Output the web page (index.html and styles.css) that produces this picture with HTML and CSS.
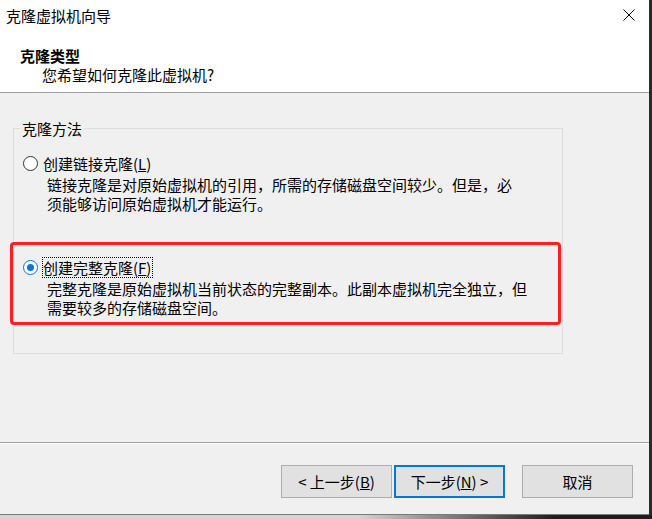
FILE: index.html
```html
<!DOCTYPE html>
<html lang="zh-CN">
<head>
    <meta charset="UTF-8">
    <meta name="viewport" content="width=device-width, initial-scale=1.0">
    <title>克隆虚拟机向导</title>
    <link rel="stylesheet" href="styles.css">
</head>
<body>

<div class="window">
    <!-- Title bar -->
    <div class="titlebar">
        <span class="title">克隆虚拟机向导</span>
        <svg class="close-icon" width="12" height="12" viewBox="0 0 12 12">
            <path d="M0.5 0.5 L11.5 11.5 M11.5 0.5 L0.5 11.5" stroke="#000" stroke-width="1" fill="none"/>
        </svg>
    </div>

    <!-- Wizard page header -->
    <div class="header">
        <div class="heading">克隆类型</div>
        <div class="subheading">您希望如何克隆此虚拟机?</div>
    </div>

    <!-- Options -->
    <div class="content">
        <fieldset class="group">
            <legend>克隆方法</legend>

            <div class="option">
                <div class="option-row">
                    <span class="radio"></span>
                    <span class="option-label">创建链接克隆(<u>L</u>)</span>
                </div>
                <p class="option-desc">链接克隆是对原始虚拟机的引用，所需的存储磁盘空间较少。但是，必<br>须能够访问原始虚拟机才能运行。</p>
            </div>

            <div class="option option-selected">
                <div class="highlight"></div>
                <div class="option-row">
                    <span class="radio radio-checked"></span>
                    <span class="option-label focused">创建完整克隆(<u>F</u>)</span>
                </div>
                <p class="option-desc">完整克隆是原始虚拟机当前状态的完整副本。此副本虚拟机完全独立，但<br>需要较多的存储磁盘空间。</p>
            </div>
        </fieldset>
    </div>

    <!-- Buttons -->
    <div class="footer">
        <button class="btn">&lt; 上一步(<u>B</u>)</button>
        <button class="btn btn-default">下一步(<u>N</u>) &gt;</button>
        <button class="btn btn-cancel">取消</button>
    </div>
</div>

</body>
</html>
```

FILE: styles.css
```css
/* Page and window frame */
body {
    margin: 0;
    background-color: #1e1e1e;
    background-image: linear-gradient(to right, #d4d4d4 0, #d4d4d4 55%, #1e1e1e 85%);
    font-family: "Noto Sans CJK SC", "Microsoft YaHei", sans-serif;
    font-size: 15px;
    color: #000;
    height: 519px;
    overflow: hidden;
}

.window {
    width: 649px;
    height: 515px;
    box-sizing: border-box;
    background-color: #f0f0f0;
    border-bottom: 1px solid #7a7a7a;
    box-shadow: 3px 0 0 #2a2a2a;
}

/* Title bar */
.titlebar {
    height: 30px;
    background-color: #fff;
    display: flex;
    align-items: center;
    justify-content: space-between;
    padding: 0 14px 0 6px;
}

.title {
    line-height: 19px;
}

.close-icon {
    display: block;
}

/* Header */
.header {
    height: 63px;
    box-sizing: border-box;
    background-color: #fff;
    border-bottom: 1px solid #a0a0a0;
    padding: 16px 0 0 20px;
}

.heading {
    font-weight: bold;
    line-height: 19px;
}

.subheading {
    padding-left: 22px;
    line-height: 19px;
}

/* Content with group box */
.content {
    height: 349px;
    box-sizing: border-box;
    padding-top: 26px;
}

.group {
    margin: 0 0 0 13px;
    width: 550px;
    min-width: 0;
    box-sizing: border-box;
    border: 1px solid #dcdcdc;
    padding: 15px 8px 36px 9px;
}

.group legend {
    padding: 0 2px;
    margin-left: -3px;
    line-height: 19px;
}

.option {
    position: relative;
}

.option + .option {
    margin-top: 44px;
}

.option-row {
    display: flex;
    align-items: center;
    height: 21px;
}

.radio {
    width: 15px;
    height: 15px;
    box-sizing: border-box;
    border: 1px solid #333;
    border-radius: 50%;
    background-color: #fff;
    margin-right: 4px;
    position: relative;
}

.radio-checked {
    border-color: #0078d7;
}

.radio-checked::after {
    content: "";
    position: absolute;
    top: 3px;
    left: 3px;
    width: 7px;
    height: 7px;
    border-radius: 50%;
    background-color: #0078d7;
}

.option-label {
    border: 1px dotted transparent;
    line-height: 19px;
    padding-right: 1px;
}

.option-label.focused {
    border-color: #000;
}

.option-desc {
    margin: 1px 0 0;
    padding-left: 24px;
    line-height: 19px;
}

/* red annotation frame */
.highlight {
    position: absolute;
    top: -15px;
    bottom: -8px;
    left: -13px;
    right: -7px;
    border: 3px solid #ff1f1f;
    border-radius: 4px;
    pointer-events: none;
}

/* Footer buttons */
.footer {
    height: 72px;
    box-sizing: border-box;
    border-top: 1px solid #a0a0a0;
    box-shadow: inset 0 1px #fff;
    padding: 22px 16px 0 0;
    display: flex;
    justify-content: flex-end;
    align-items: flex-start;
}

.btn {
    width: 111px;
    height: 33px;
    box-sizing: border-box;
    border: 1px solid #adadad;
    background-color: #e1e1e1;
    font-family: inherit;
    font-size: 15px;
    color: #000;
    padding: 0;
}

.btn + .btn {
    margin-left: 2px;
}

.btn-default {
    border: 2px solid #0078d7;
}

.btn.btn-cancel {
    margin-left: 17px;
}
```
